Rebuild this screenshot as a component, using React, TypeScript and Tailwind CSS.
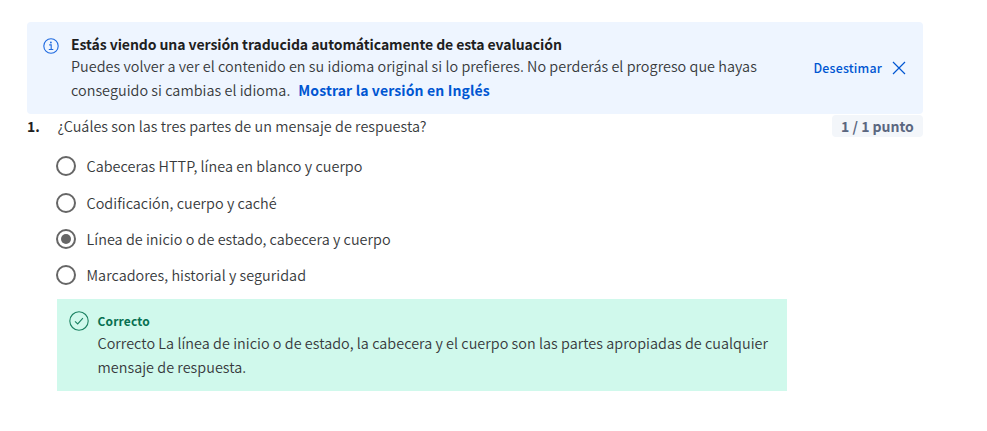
const options = [
  { label: 'Cabeceras HTTP, línea en blanco y cuerpo', checked: false, gap: 'mb-[17px]' },
  { label: 'Codificación, cuerpo y caché', checked: false, gap: 'mb-4' },
  { label: 'Línea de inicio o de estado, cabecera y cuerpo', checked: true, gap: 'mb-4' },
  { label: 'Marcadores, historial y seguridad', checked: false, gap: '' },
];

function InfoIcon() {
  return (
    <svg className="mt-4 size-4 shrink-0" viewBox="0 0 16 16" fill="none" stroke="#1f6ae0">
      <circle cx="8" cy="8" r="7.2" strokeWidth="1.1" />
      <path d="M6.2 6.9h2v4.6M5.8 11.5h4.5" strokeWidth="1.1" />
      <circle cx="7.9" cy="4.5" r="0.9" fill="#1f6ae0" stroke="none" />
    </svg>
  );
}

function CheckIcon() {
  return (
    <svg className="mt-3 size-5 shrink-0" viewBox="0 0 20 20" fill="none" stroke="#1c8262">
      <circle cx="10" cy="10" r="9.2" strokeWidth="1.1" />
      <path d="M6 10.3l2.7 2.6 5.2-5.8" strokeWidth="1.1" />
    </svg>
  );
}

function Radio({ checked }: { checked: boolean }) {
  return (
    <span className="flex size-5 shrink-0 items-center justify-center rounded-full border-2 border-[#666]">
      {checked && <span className="size-2.5 rounded-full bg-[#666]" />}
    </span>
  );
}

export default function App() {
  return (
    <main className="h-[431px] bg-white pt-[22px] pl-[27px] font-['Noto_Sans_CJK_SC',sans-serif] text-[14.4px] leading-6 font-[350] tracking-[0.032px] text-[#373a3c]">
      <div className="w-[896px]">
        <section className="flex h-[92px] rounded bg-[#eef5ff] pl-4">
          <InfoIcon />
          <div className="ml-3 w-[700px] pt-2.5 whitespace-nowrap">
            <p className="h-[22px] text-[14px] font-bold tracking-[-0.08px] text-[#1f1f1f]"><span>Estás viendo una versión traducida automáticamente de esta evaluación</span></p>
            <p><span>Puedes volver a ver el contenido en su idioma original si lo prefieres. No perderás el progreso que hayas</span></p>
            <p>
              <span>conseguido si cambias el idioma.</span>
              <a className="ml-2 text-[14px] font-bold tracking-[0.12px] text-[#0056d2]">Mostrar la versión en Inglés</a>
            </p>
          </div>
          <button className="ml-auto flex items-center pr-[17px] text-[12.4px] font-medium tracking-[0.18px] text-[#0056d2]">
            <span>Desestimar</span>
            <svg className="ml-2.5 size-[14px]" viewBox="0 0 14 14" stroke="#0056d2" strokeWidth="1.2">
              <path d="M1 1l12 12M13 1L1 13" />
            </svg>
          </button>
        </section>
        <div className="flex h-6 items-center">
          <span className="w-[30.5px] text-[14px] font-bold text-[#1f1f1f]">1.</span>
          <p><span>¿Cuáles son las tres partes de un mensaje de respuesta?</span></p>
          <span className="ml-auto flex h-[22px] w-[91px] items-center justify-center rounded bg-[#f3f6fa] text-[14px] font-bold tracking-normal text-[#5b6780]">1 / 1 punto</span>
        </div>
        <div className="mt-[18px] ml-[29px]">
          {options.map((option) => (
            <label key={option.label} className={`flex h-5 items-center ${option.gap}`}>
              <Radio checked={option.checked} />
              <span className="ml-[10.5px]">{option.label}</span>
            </label>
          ))}
        </div>
        <section className="mt-[14px] ml-[30px] flex h-[92px] w-[730px] bg-[#d0f9ec] pl-3">
          <CheckIcon />
          <div className="ml-[8.5px] pt-2.5 whitespace-nowrap">
            <h2 className="h-[22px] text-[12px] font-bold tracking-[0.14px] text-[#087051]"><span>Correcto</span></h2>
            <p><span>Correcto La línea de inicio o de estado, la cabecera y el cuerpo son las partes apropiadas de cualquier</span></p>
            <p><span>mensaje de respuesta.</span></p>
          </div>
        </section>
      </div>
    </main>
  );
}
